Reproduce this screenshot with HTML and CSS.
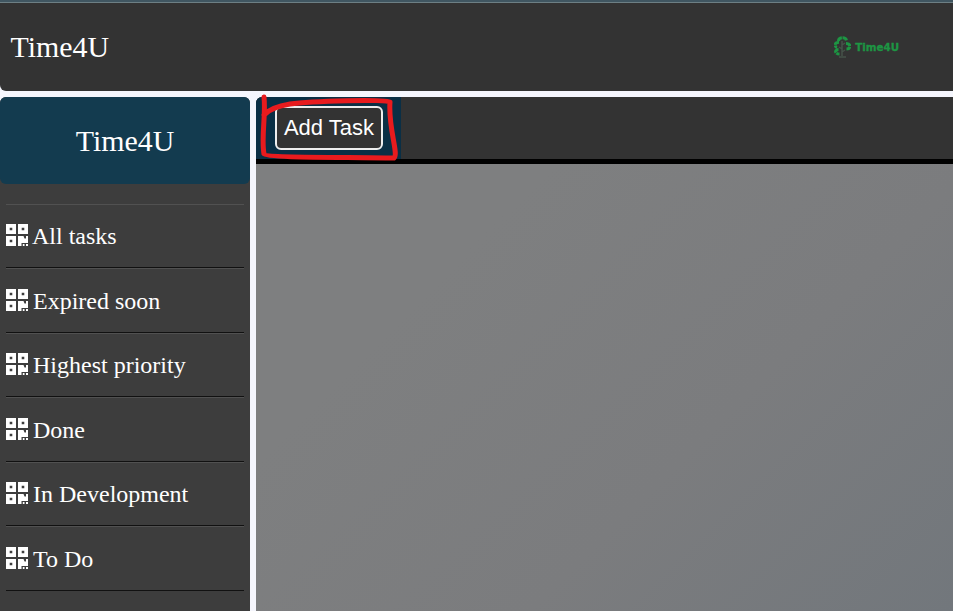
FILE: index.html
```html
<!DOCTYPE html>
<html lang="en">
<head>
<meta charset="utf-8">
<title>Time4U</title>
<link rel="stylesheet" href="styles.css">
</head>
<body>
<svg class="defs" aria-hidden="true">
  <symbol id="qr" viewBox="0 0 22 22">
    <path fill-rule="evenodd" d="M0 0h10v10H0zM3.7 3.7v2.6h2.6V3.7zM12 0h10v10H12zM15.7 3.7v2.6h2.6V3.7zM0 12h10v10H0zM3.7 15.7v2.6h2.6v-2.6z"/>
    <path d="M12 12h5.5l1 2.5h1.5V12h2v7h-6.5v3H12zM16.8 20h1.7v2h-1.7zM20 20h2v2h-2z"/>
  </symbol>
</svg>
<header class="topbar">
  <div class="title">Time4U</div>
  <div class="logo">
    <svg class="tree" width="17" height="22" viewBox="0 0 17 22">
      <path class="trunk" d="M8 5v15M5 21h7M8 9l3-2M8 13l-3-2M8 16l3-2"/>
      <path class="leaves" d="M4.5 5C4.5 .7 12.5 .7 12.5 5M5 6.5c-4.5-.5-5 4-2 5M12 7.5c5 0 5 5.5 .5 5.5M4.5 13.5c-4 0-4 4.5 1 4.5"/>
    </svg>
    <span>Time4U</span>
  </div>
</header>
<div class="layout">
  <aside class="sidebar">
    <div class="brand">Time4U</div>
    <nav class="menu">
      <a class="item"><svg><use href="#qr"/></svg><span>All tasks</span></a>
      <a class="item"><svg><use href="#qr"/></svg><span>Expired soon</span></a>
      <a class="item"><svg><use href="#qr"/></svg><span>Highest priority</span></a>
      <a class="item"><svg><use href="#qr"/></svg><span>Done</span></a>
      <a class="item"><svg><use href="#qr"/></svg><span>In Development</span></a>
      <a class="item"><svg><use href="#qr"/></svg><span>To Do</span></a>
    </nav>
  </aside>
  <main class="content">
    <div class="toolbar">
      <div class="action">
        <button class="add">Add Task</button>
        <svg class="marker" width="142" height="70" viewBox="0 0 142 70">
          <path d="M8 5C10 24 5 45 8 62C10 66 90 65 138 66C143 62 132 36 134 10C132 7 55 9 34 12Q15 15 8 23"/>
        </svg>
      </div>
    </div>
  </main>
</div>
</body>
</html>
```
FILE: styles.css
```css
* {
  box-sizing: border-box;
}

body {
  margin: 0;
  height: 611px;
  overflow: hidden;
  display: flex;
  flex-direction: column;
  gap: 6px;
  background: #f5f6fd;
  color: #fff;
  font-family: "Liberation Serif", serif;
}

.defs {
  position: absolute;
  width: 0;
  height: 0;
}

.topbar {
  flex: none;
  height: 91px;
  padding: 0 54px 0 10.5px;
  display: flex;
  align-items: center;
  justify-content: space-between;
  background: linear-gradient(#405661 2px, #6d7f84 2px 3px, #333 3px);
  border-radius: 0 0 0 6px;
}

.title,
.brand {
  font-size: 29.9px;
}

.title {
  padding-top: 3px;
}

.logo {
  display: flex;
  align-items: center;
  gap: 4px;
  padding-top: 3px;
  color: #1d9543;
  font: 900 10.3px "DejaVu Sans", sans-serif;
  -webkit-text-stroke: 0.3px #1d9543;
}

.tree path {
  fill: none;
}

.tree .trunk {
  stroke: #46534a;
  stroke-width: 1.5;
}

.tree .leaves {
  stroke: #1d9543;
  stroke-width: 3;
  stroke-dasharray: 5 0.6;
}

.layout {
  flex: 1;
  min-height: 0;
  display: flex;
  gap: 6px;
}

.sidebar {
  width: 250px;
  background: #3d3d3d;
  border-radius: 6px 6px 0 0;
}

.brand {
  height: 87px;
  padding-top: 1px;
  display: flex;
  align-items: center;
  justify-content: center;
  background: #133b4f;
  border-radius: 6px;
}

.menu {
  padding: 19.6px 6px 0;
}

.item {
  height: 64.5px;
  padding-top: 1px;
  display: flex;
  align-items: center;
  gap: 5px;
  border-top: 1px solid #515151;
  border-bottom: 1px solid #111;
  font-size: 24px;
}

.item span {
  padding-top: 0.8px;
}

.item svg {
  width: 22px;
  height: 22px;
  margin-top: -2px;
  fill: #fff;
}

.item:first-child {
  gap: 4px;
}

.content {
  flex: 1;
  background: linear-gradient(135deg, #7e7f80 30%, #7b7c7e 65%, #72777c);
  border-radius: 6px 0 0 0;
}

.toolbar {
  height: 67px;
  background: linear-gradient(#333 62px, #000 62px);
  border-radius: 6px 0 0 0;
}

.action {
  position: relative;
  width: 145px;
  height: 62px;
  padding: 9px 0 0 19px;
  background: #0a2f45;
  border-radius: 6px 0 0 0;
}

.add {
  display: block;
  width: 108px;
  height: 44px;
  padding: 0;
  border: 2px solid #eee;
  border-radius: 6px;
  background: #333;
  color: #fff;
  font: 22px "Liberation Sans", sans-serif;
  white-space: nowrap;
}

.marker {
  position: absolute;
  left: 0;
  top: -5px;
  fill: none;
  stroke: #e81b1e;
  stroke-width: 5;
  stroke-linecap: round;
  stroke-linejoin: round;
}
```
